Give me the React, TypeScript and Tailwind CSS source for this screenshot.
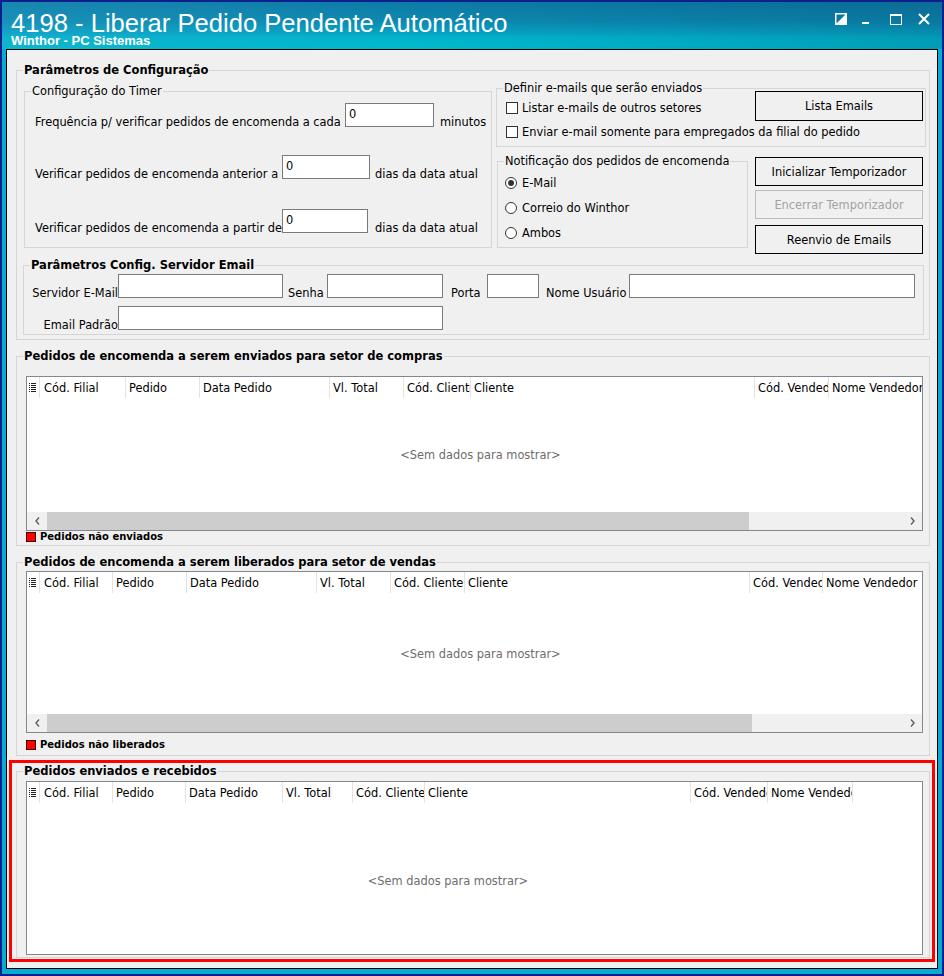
import React from "react";

type Col = { label: string; w: number };

const comprasCols: Col[] = [
  { label: "Cód. Filial", w: 86 },
  { label: "Pedido", w: 74 },
  { label: "Data Pedido", w: 130 },
  { label: "Vl. Total", w: 74 },
  { label: "Cód. Cliente", w: 67 },
  { label: "Cliente", w: 284 },
  { label: "Cód. Vendedor", w: 74 },
  { label: "Nome Vendedor", w: 120 },
];

const vendasCols: Col[] = [
  { label: "Cód. Filial", w: 73 },
  { label: "Pedido", w: 74 },
  { label: "Data Pedido", w: 130 },
  { label: "Vl. Total", w: 74 },
  { label: "Cód. Cliente", w: 74 },
  { label: "Cliente", w: 285 },
  { label: "Cód. Vendedor", w: 73 },
  { label: "Nome Vendedor", w: 120 },
];

const recebidosCols: Col[] = [
  { label: "Cód. Filial", w: 73 },
  { label: "Pedido", w: 73 },
  { label: "Data Pedido", w: 97 },
  { label: "Vl. Total", w: 70 },
  { label: "Cód. Cliente", w: 72 },
  { label: "Cliente", w: 266 },
  { label: "Cód. Vendedor", w: 77 },
  { label: "Nome Vendedor", w: 85 },
];

function Group({
  title,
  bold = false,
  className = "",
  children,
}: {
  title: string;
  bold?: boolean;
  className?: string;
  children?: React.ReactNode;
}) {
  return (
    <fieldset className={`shrink-0 border border-[#d5d5d5] ${className}`}>
      <legend
        className={`ml-[6px] px-[1px] leading-[14px] whitespace-nowrap ${
          bold ? "text-[11.5px] font-bold" : ""
        }`}
      >
        {title}
      </legend>
      {children}
    </fieldset>
  );
}

function TextBox({ className = "", value = "" }: { className?: string; value?: string }) {
  return (
    <div className={`shrink-0 h-[24px] bg-white border border-[#7a7a7a] pl-[3px] pt-[4px] leading-[12px] ${className}`}>
      {value}
    </div>
  );
}

function Btn({
  children,
  disabled = false,
  className = "",
}: {
  children: React.ReactNode;
  disabled?: boolean;
  className?: string;
}) {
  return (
    <div
      className={`w-[168px] shrink-0 flex items-center justify-center bg-[#f0f0f0] border ${
        disabled ? "border-[#bcbcbc] text-[#a3a3a3]" : "border-black text-black"
      } ${className}`}
    >
      {children}
    </div>
  );
}

function Check({ label, className = "" }: { label: string; className?: string }) {
  return (
    <div className={`flex items-center h-[12px] ${className}`}>
      <div className="w-[12px] h-[12px] bg-white border border-[#333333]" />
      <span className="ml-[4px] whitespace-nowrap">{label}</span>
    </div>
  );
}

function Radio({ label, checked = false, className = "" }: { label: string; checked?: boolean; className?: string }) {
  return (
    <div className={`flex items-center h-[12px] ${className}`}>
      <div className="w-[12px] h-[12px] rounded-full bg-white border border-[#333333] flex items-center justify-center">
        {checked && <div className="w-[6px] h-[6px] rounded-full bg-[#333333]" />}
      </div>
      <span className="ml-[5px] whitespace-nowrap">{label}</span>
    </div>
  );
}

function ListIcon() {
  return (
    <svg width="7" height="9" viewBox="0 0 7 9" className="block">
      {[0, 2, 4, 6, 8].map((y) => (
        <g key={y}>
          <rect x="0" y={y} width="1" height="1" fill="#202020" />
          <rect x="2" y={y} width="5" height="1" fill="#202020" />
        </g>
      ))}
    </svg>
  );
}

function Chevron({ dir }: { dir: "l" | "r" }) {
  return (
    <svg width="5" height="8" viewBox="0 0 5 8" className="block">
      <path
        d={dir === "l" ? "M4 0.5 L1 4 L4 7.5" : "M1 0.5 L4 4 L1 7.5"}
        stroke="#606060"
        strokeWidth="1.4"
        fill="none"
      />
    </svg>
  );
}

function Grid({
  cols,
  className = "",
  thumb,
  emptyClass = "",
}: {
  cols: Col[];
  className?: string;
  thumb?: number;
  emptyClass?: string;
}) {
  return (
    <div className={`shrink-0 flex flex-col border border-[#828790] bg-white overflow-hidden ${className}`}>
      <div className="flex h-[21px] shrink-0">
        <div className="w-[13px] shrink-0 border-r border-[#e3e3e3] flex items-center pl-[2px]">
          <ListIcon />
        </div>
        {cols.map((c, i) => (
          <div
            key={i}
            style={{ width: c.w }}
            className={`shrink-0 border-r border-[#e3e3e3] overflow-hidden whitespace-nowrap flex items-center ${
              i === 0 ? "pl-[4px]" : "pl-[3px]"
            }`}
          >
            {c.label}
          </div>
        ))}
      </div>
      <div className={`flex-1 flex items-center justify-center text-[#6d6d6d] ${emptyClass}`}>
        &lt;Sem dados para mostrar&gt;
      </div>
      {thumb !== undefined && (
        <div className="h-[18px] shrink-0 flex bg-[#f0f0f0]">
          <div className="w-[20px] flex items-center justify-center">
            <Chevron dir="l" />
          </div>
          <div style={{ width: thumb }} className="bg-[#cdcdcd]" />
          <div className="flex-1" />
          <div className="w-[19px] flex items-center justify-center">
            <Chevron dir="r" />
          </div>
        </div>
      )}
    </div>
  );
}

function LegendMark({ label, className = "" }: { label: string; className?: string }) {
  return (
    <div className={`ml-[9px] flex items-center h-[11px] ${className}`}>
      <div className="w-[10px] h-[10px] bg-[#ff0000] border border-[#3a0000]" />
      <span className="ml-[4px] text-[10px] font-bold leading-[11px] whitespace-nowrap">{label}</span>
    </div>
  );
}

function TitleBar() {
  return (
    <div className="h-[47px] shrink-0 flex justify-between text-white bg-[linear-gradient(100deg,rgba(60,170,210,0.25)_0%,rgba(0,0,0,0)_45%,rgba(0,40,80,0.18)_100%),linear-gradient(180deg,#0d7aa4_0%,#0c88b0_40%,#06a3c4_66%,#00b5cb_76%,#00b8cd_100%)]">
      <div className="pl-[9px] pt-[11px] flex flex-col font-['Liberation_Sans',Arial,sans-serif]">
        <div className="text-[25.6px] leading-[21px] whitespace-nowrap">4198 - Liberar Pedido Pendente Automático</div>
        <div className="text-[13px] leading-[13px] font-bold whitespace-nowrap">Winthor - PC Sistemas</div>
      </div>
      <div className="pt-[11px] pr-[12px] flex items-start">
        <svg width="12" height="12" viewBox="0 0 12 12" className="block">
          <rect x="0.75" y="0.75" width="10.5" height="10.5" fill="none" stroke="white" strokeWidth="1.5" />
          <path d="M1 11 L11 1 L11 11 Z" fill="white" />
        </svg>
        <div className="ml-[15px] mt-[9px] w-[7px] h-[2px] bg-white" />
        <svg width="12" height="11" viewBox="0 0 12 11" className="block ml-[21px] mt-[1px]">
          <rect x="0.5" y="1" width="11" height="9.5" fill="none" stroke="white" strokeWidth="1" />
          <rect x="0" y="0" width="12" height="2" fill="white" />
        </svg>
        <svg width="12" height="12" viewBox="0 0 12 12" className="block ml-[16px]">
          <path d="M1 1 L11 11 M11 1 L1 11" stroke="white" strokeWidth="2" />
        </svg>
      </div>
    </div>
  );
}

function ConfigGroup() {
  return (
    <Group title="Parâmetros de Configuração" bold className="ml-[9px] mt-[13px] w-[914px] h-[277px]">
      <div className="flex flex-col">
        <div className="flex items-start">
          <Group title="Configuração do Timer" className="ml-[7px] mt-[7px] w-[468px] h-[164px]">
            <div className="pl-[10px] flex flex-col">
              <div className="mt-[5px] flex items-end">
                <span className="w-[310px] shrink-0 -mb-[2px] whitespace-nowrap">
                  Frequência p/ verificar pedidos de encomenda a cada
                </span>
                <TextBox className="w-[89px]" value="0" />
                <span className="ml-[6px] -mb-[2px]">minutos</span>
              </div>
              <div className="mt-[28px] flex items-end">
                <span className="w-[247px] shrink-0 -mb-[2px] whitespace-nowrap">
                  Verificar pedidos de encomenda anterior a
                </span>
                <TextBox className="w-[88px]" value="0" />
                <span className="ml-[5px] -mb-[2px] whitespace-nowrap">dias da data atual</span>
              </div>
              <div className="mt-[30px] flex items-end">
                <span className="w-[247px] shrink-0 -mb-[2px] whitespace-nowrap">
                  Verificar pedidos de encomenda a partir de
                </span>
                <TextBox className="w-[86px]" value="0" />
                <span className="ml-[7px] -mb-[2px] whitespace-nowrap">dias da data atual</span>
              </div>
            </div>
          </Group>

          <div className="ml-[4px] flex flex-col">
            <Group title="Definir e-mails que serão enviados" className="mt-[4px] w-[430px] h-[66px]">
              <div className="flex flex-col">
                <div className="flex items-start h-[19px]">
                  <Check label="Listar e-mails de outros setores" className="ml-[9px] mt-[7px]" />
                  <Btn className="ml-auto mr-[2px] -mt-[4px] h-[30px]">Lista Emails</Btn>
                </div>
                <Check
                  label="Enviar e-mail somente para empregados da filial do pedido"
                  className="ml-[9px] mt-[12px]"
                />
              </div>
            </Group>
            <div className="flex items-start">
              <Group title="Notificação dos pedidos de encomenda" className="ml-[1px] mt-[7px] w-[251px] h-[94px]">
                <div className="pl-[7px] pt-[9px] flex flex-col">
                  <Radio label="E-Mail" checked />
                  <Radio label="Correio do Winthor" className="mt-[13px]" />
                  <Radio label="Ambos" className="mt-[13px]" />
                </div>
              </Group>
              <div className="ml-[7px] mt-[10px] flex flex-col">
                <Btn className="h-[29px]">Inicializar Temporizador</Btn>
                <Btn disabled className="mt-[4px] h-[29px]">
                  Encerrar Temporizador
                </Btn>
                <Btn className="mt-[6px] h-[29px]">Reenvio de Emails</Btn>
              </div>
            </div>
          </div>
        </div>

        <Group title="Parâmetros Config. Servidor Email" bold className="ml-[6px] mt-[4px] w-[901px] h-[77px]">
          <div className="flex flex-col">
            <div className="mt-[2px] flex items-end">
              <span className="w-[94px] shrink-0 text-right -mb-[2px] whitespace-nowrap">Servidor E-Mail</span>
              <TextBox className="w-[165px]" />
              <span className="w-[44px] shrink-0 pl-[5px] -mb-[2px]">Senha</span>
              <TextBox className="w-[116px]" />
              <span className="w-[44px] shrink-0 pl-[8px] -mb-[2px]">Porta</span>
              <TextBox className="w-[52px]" />
              <span className="w-[90px] shrink-0 pl-[7px] -mb-[2px] whitespace-nowrap">Nome Usuário</span>
              <TextBox className="w-[286px]" />
            </div>
            <div className="mt-[8px] flex items-end">
              <span className="w-[94px] shrink-0 text-right -mb-[2px] whitespace-nowrap">Email Padrão</span>
              <TextBox className="w-[325px]" />
            </div>
          </div>
        </Group>
      </div>
    </Group>
  );
}

export default function App() {
  return (
    <div className="w-[944px] h-[976px] border-2 border-[#0b1f8f] bg-[#07acd0] flex flex-col overflow-hidden font-['DejaVu_Sans',sans-serif] text-[11.4px] leading-[14px] text-black">
      <TitleBar />
      <div className="mx-[4px] h-[920px] shrink-0 border border-black bg-[#f0f0f0] flex flex-col">
        <ConfigGroup />

        <Group
          title="Pedidos de encomenda a serem enviados para setor de compras"
          bold
          className="ml-[9px] mt-[9px] w-[914px] h-[197px]"
        >
          <div className="flex flex-col">
            <Grid cols={comprasCols} thumb={702} className="ml-[9px] mt-[13px] w-[897px] h-[155px]" emptyClass="pl-[12px]" />
            <LegendMark label="Pedidos não enviados" />
          </div>
        </Group>

        <Group
          title="Pedidos de encomenda a serem liberados para setor de vendas"
          bold
          className="ml-[9px] mt-[9px] w-[914px] h-[201px]"
        >
          <div className="flex flex-col">
            <Grid cols={vendasCols} thumb={705} className="ml-[9px] mt-[2px] w-[897px] h-[162px]" emptyClass="pl-[12px]" />
            <LegendMark label="Pedidos não liberados" className="mt-[6px]" />
          </div>
        </Group>

        <div className="mx-[2px] mt-[4px] h-[202px] shrink-0 border-[3px] border-[#ff0000] flex flex-col">
          <Group title="Pedidos enviados e recebidos" bold className="ml-[4px] mt-[1px] w-[914px] h-[194px]">
            <div className="flex flex-col">
              <Grid cols={recebidosCols} className="ml-[9px] mt-[3px] w-[897px] h-[174px]" emptyClass="pr-[53px] pt-[4px]" />
            </div>
          </Group>
        </div>
      </div>
    </div>
  );
}
